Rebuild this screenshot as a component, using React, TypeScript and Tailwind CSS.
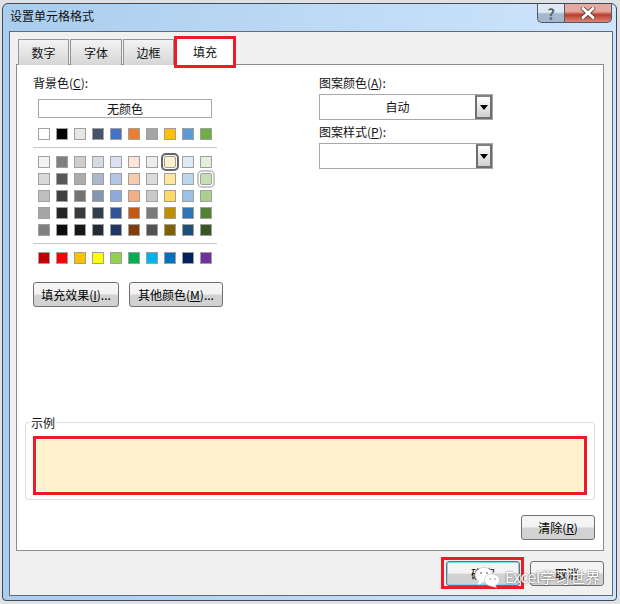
const base = ['#ffffff', '#000000', '#e7e6e6', '#44546a', '#4472c4', '#ed7d31', '#a5a5a5', '#ffc000', '#5b9bd5', '#70ad47']
const theme = [
  ['#f2f2f2', '#808080', '#d0cece', '#d6dce4', '#d9e1f2', '#fce4d6', '#ededed', '#fff2cc', '#ddebf7', '#e2efda'],
  ['#d9d9d9', '#595959', '#aeaaaa', '#acb9ca', '#b4c6e7', '#f8cbad', '#dbdbdb', '#ffe699', '#bdd7ee', '#c6e0b4'],
  ['#bfbfbf', '#404040', '#757171', '#8497b0', '#8ea9db', '#f4b084', '#c9c9c9', '#ffd966', '#9bc2e6', '#a9d08e'],
  ['#a6a6a6', '#262626', '#3a3838', '#323f4f', '#305496', '#c65911', '#7b7b7b', '#bf8f00', '#2f75b5', '#548235'],
  ['#808080', '#0d0d0d', '#171717', '#222b35', '#203764', '#833c0b', '#525252', '#806000', '#1f4e78', '#375623'],
]
const standard = ['#c00000', '#ff0000', '#ffc000', '#ffff00', '#92d050', '#00b050', '#00b0f0', '#0070c0', '#002060', '#7030a0']

function Swatch({ color, ring }: { color: string; ring?: 'dark' | 'light' }) {
  return (
    <div
      className={
        'w-3 h-3 border border-[#a0a0a0] ' +
        (ring === 'dark' ? 'outline-2 outline-offset-1 outline-[#666666] rounded-[2px] ' : '') +
        (ring === 'light' ? 'outline-2 outline-offset-1 outline-[#c8c8c8] rounded-[2px] ' : '')
      }
      style={{ backgroundColor: color }}
    />
  )
}

function SwatchRow({ colors, row }: { colors: string[]; row?: number }) {
  return (
    <div className="flex gap-[6px] pl-[5px]">
      {colors.map((c, i) => (
        <Swatch
          key={i}
          color={c}
          ring={row === 0 && i === 7 ? 'dark' : row === 1 && i === 9 ? 'light' : undefined}
        />
      ))}
    </div>
  )
}

function Btn({ children, className }: { children: React.ReactNode; className?: string }) {
  return (
    <button
      className={
        'h-[25px] shrink-0 flex items-center justify-center rounded-[3px] border border-[#707070] bg-linear-to-b from-[#f4f4f4] from-45% to-[#d2d2d2] to-55% text-[12px] text-black ' +
        (className ?? '')
      }
    >
      {children}
    </button>
  )
}

function Select({ value, arrowWidth }: { value?: string; arrowWidth: string }) {
  return (
    <div className="w-[174px] h-[26px] border border-[#a8a8a8] bg-white flex">
      <div className="flex-1 flex items-center justify-center text-[12px]">{value}</div>
      <div className={'border-2 border-[#6e6e6e] border-t-[#808080] bg-linear-to-b from-white to-[#cfcfcf] flex items-center justify-center ' + arrowWidth}>
        <div className="w-0 h-0 border-x-[4px] border-x-transparent border-t-[5px] border-t-black" />
      </div>
    </div>
  )
}

function Tab({ children, className }: { children: React.ReactNode; className: string }) {
  return (
    <div className={'h-[26px] mt-px flex items-center justify-center border border-b-0 border-[#8e96a0] bg-linear-to-b from-[#f3f3f3] to-[#d6d6d6] text-[12px] ' + className}>
      {children}
    </div>
  )
}

export default function App() {
  return (
    <div
      className="relative w-[620px] h-[604px] overflow-hidden bg-[#dfe1e4] pl-[2px] pt-[3px] text-[#111]"
      style={{ fontFamily: '"Noto Sans CJK SC", "Liberation Sans", sans-serif' }}
    >
      <div className="w-[615px] h-[598px] rounded-t-[6px] rounded-b-[4px] border border-[#3f4a56] bg-linear-to-r from-[#a9cdee] via-[#bcd9f5] to-[#cfe5fb] pl-[6px] pr-[3px] flex flex-col">
        <div className="h-[27px] flex justify-between shrink-0">
          <div className="pl-px pt-[3px] text-[12px] leading-[18px]">设置单元格格式</div>
          <div className="flex h-[19px] mr-px">
            <div className="w-[28px] flex items-center justify-center rounded-bl-[5px] border border-t-0 border-[#4f5b68] bg-linear-to-b from-[#dfe9f3] from-45% to-[#a3b8cc] to-55% text-[15px] leading-none font-bold text-[#5a6673]">?</div>
            <div className="w-[47px] flex items-center justify-center rounded-br-[5px] border border-t-0 border-l-0 border-[#4f5b68] bg-linear-to-b from-[#e6a99f] from-40% via-[#bb3a2c] via-60% to-[#d8867a]">
              <svg width="16" height="12" viewBox="0 0 16 12">
                <path d="M3 1.5 L13 10.5 M13 1.5 L3 10.5" stroke="#5b3a36" strokeWidth="4.4" strokeLinecap="round" />
                <path d="M3 1.5 L13 10.5 M13 1.5 L3 10.5" stroke="#ffffff" strokeWidth="3" strokeLinecap="round" />
              </svg>
            </div>
          </div>
        </div>

        <div className="flex-1 border border-[#5f6b78] bg-[#f0f0f0] pl-[6px] pt-[6px] flex flex-col mb-[4px] w-[604px]">
          <div className="flex pl-[2px] h-[26px] relative z-10 items-start">
            <Tab className="w-[51px] mr-px">数字</Tab>
            <Tab className="w-[52px] mr-px">字体</Tab>
            <Tab className="w-[51px] mr-[3px]">边框</Tab>
            <div className="relative w-[56px] h-[28px] bg-white flex items-center justify-center text-[12px]">
              填充
              <div className="absolute -left-[3px] -right-[3px] -top-[2px] -bottom-[2px] border-[3px] border-[#ed1c24]" />
            </div>
          </div>

          <div className="w-[588px] h-[487px] border border-[#898c95] bg-white flex flex-col">
            <div className="h-[357px] shrink-0 flex pl-4 pt-[10px]">
              <div className="w-[184px]">
                <div className="text-[12px] leading-4">背景色(<u>C</u>):</div>
                <div className="ml-[5px] mt-2 w-[174px] h-[19px] border border-[#a8a8a8] flex items-center justify-center text-[12px]">无颜色</div>
                <div className="mt-[10px]">
                  <SwatchRow colors={base} />
                </div>
                <div className="mt-[7px] h-px bg-[#c8c8c8]" />
                <div className="mt-2 flex flex-col gap-[5px]">
                  {theme.map((r, i) => (
                    <SwatchRow key={i} colors={r} row={i} />
                  ))}
                </div>
                <div className="mt-[7px] h-px bg-[#c8c8c8]" />
                <div className="mt-2">
                  <SwatchRow colors={standard} />
                </div>
                <div className="mt-[18px] flex gap-[10px]">
                  <Btn className="w-[86px]">填充效果(<u>I</u>)...</Btn>
                  <Btn className="w-[94px]">其他颜色(<u>M</u>)...</Btn>
                </div>
              </div>
              <div className="ml-[102px]">
                <div className="text-[12px] leading-4">图案颜色(<u>A</u>):</div>
                <div className="mt-[3px]">
                  <Select value="自动" arrowWidth="w-[17px]" />
                </div>
                <div className="mt-1 text-[12px] leading-4">图案样式(<u>P</u>):</div>
                <div className="mt-[3px]">
                  <Select arrowWidth="w-[16px]" />
                </div>
              </div>
            </div>

            <div className="relative ml-2 w-[570px] h-[78px] rounded-[3px] border border-[#d5dfe5] pl-[7px] pt-[13px]">
              <div className="absolute left-[4px] -top-[8px] bg-white px-px text-[12px] leading-4">示例</div>
              <div className="w-[554px] h-[59px] border-[3px] border-[#ed1c24] bg-white p-px">
                <div className="w-full h-full bg-[#fff2cc]" />
              </div>
            </div>

            <div className="mt-[15px] mr-[8px] self-end">
              <Btn className="w-[74px]">清除(<u>R</u>)</Btn>
            </div>
          </div>

          <div className="mt-[6px] flex justify-end gap-[6px] pr-[8px]">
            <div className="w-[83px] h-[32px] border-[3px] border-[#ed1c24] pl-[2px] pt-px">
              <Btn className="w-[74px] border-[#3c9fd0] shadow-[inset_0_0_0_1px_#7fd2f0]">确定</Btn>
            </div>
            <div className="mt-[4px]">
              <Btn className="w-[74px]">取消</Btn>
            </div>
          </div>
        </div>
      </div>

      {/* watermark */}
      <div className="absolute left-[473px] top-[566px] flex items-center gap-[4px] text-white text-[15px] leading-5 [text-shadow:0_0_2px_#444]">
        <svg width="28" height="22" viewBox="0 0 28 22">
          <ellipse cx="11" cy="9" rx="9" ry="7.5" fill="#fff" stroke="#bbb" strokeWidth="0.6" />
          <path d="M6 14 L5 19 L10 16 Z" fill="#fff" />
          <ellipse cx="19" cy="14" rx="7.5" ry="6.2" fill="#fff" stroke="#bbb" strokeWidth="0.6" />
          <path d="M22 19 L24 22 L18 20 Z" fill="#fff" />
          <circle cx="8" cy="7" r="1" fill="#8a8a8a" />
          <circle cx="14" cy="7" r="1" fill="#8a8a8a" />
          <circle cx="17" cy="13" r="0.8" fill="#8a8a8a" />
          <circle cx="22" cy="13" r="0.8" fill="#8a8a8a" />
        </svg>
        <span>Excel学习世界</span>
      </div>
    </div>
  )
}
